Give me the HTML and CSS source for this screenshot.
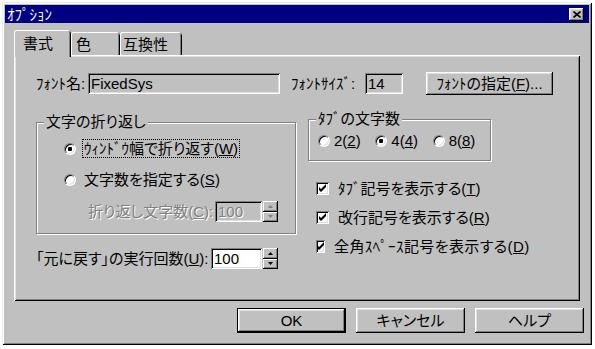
FILE: index.html
```html
<!DOCTYPE html>
<html lang="ja">
<head>
    <meta charset="UTF-8">
    <meta name="viewport" content="width=device-width, initial-scale=1.0">
    <title>オプション</title>
    <link rel="stylesheet" href="styles.css">
</head>
<body>
    <div class="window">
        <div class="titlebar">
            <span class="title">ｵﾌﾟｼｮﾝ</span>
            <span class="close-btn">
                <svg width="8" height="7" viewBox="0 0 8 7"><path d="M0.5 0.5l7 6M7.5 0.5l-7 6" stroke="#000" stroke-width="1.6"/></svg>
            </span>
        </div>

        <div class="tabs">
            <div class="tab active tab-format">書式</div>
            <div class="tab tab-color">色</div>
            <div class="tab tab-compat">互換性</div>
        </div>

        <div class="panel">
            <div class="font-row">
                <span class="lbl-name">ﾌｫﾝﾄ名:</span>
                <div class="textbox readonly tb-name">FixedSys</div>
                <span class="lbl-size">ﾌｫﾝﾄｻｲｽﾞ:</span>
                <div class="textbox readonly tb-size">14</div>
                <div class="button btn-font">ﾌｫﾝﾄの指定(<u>F</u>)...</div>
            </div>

            <div class="columns">
                <div class="col-left">
                    <div class="group group-wrap">
                        <span class="group-title">文字の折り返し</span>
                        <div class="option">
                            <span class="radio checked"></span>
                            <span class="opt-text focus">ｳｨﾝﾄﾞｳ幅で折り返す(<u>W</u>)</span>
                        </div>
                        <div class="option option-2">
                            <span class="radio"></span>
                            <span class="opt-text">文字数を指定する(<u>S</u>)</span>
                        </div>
                        <div class="field-row wrap-count">
                            <span class="disabled lbl-count">折り返し文字数(<u>C</u>):</span>
                            <div class="textbox readonly disabled tb-count">100</div>
                            <div class="spinner disabled">
                                <span class="spin-btn"><svg width="5" height="3" viewBox="0 0 5 3"><path d="M0 3h5L2.5 0z"/></svg></span>
                                <span class="spin-btn"><svg width="5" height="3" viewBox="0 0 5 3"><path d="M0 0h5L2.5 3z"/></svg></span>
                            </div>
                        </div>
                    </div>

                    <div class="field-row undo-row">
                        <span class="lbl-undo">「元に戻す」の実行回数(<u>U</u>):</span>
                        <div class="textbox tb-undo">100</div>
                        <div class="spinner">
                            <span class="spin-btn"><svg width="5" height="3" viewBox="0 0 5 3"><path d="M0 3h5L2.5 0z"/></svg></span>
                            <span class="spin-btn"><svg width="5" height="3" viewBox="0 0 5 3"><path d="M0 0h5L2.5 3z"/></svg></span>
                        </div>
                    </div>
                </div>

                <div class="col-right">
                    <div class="group group-tabs">
                        <span class="group-title">ﾀﾌﾞの文字数</span>
                        <div class="tab-sizes">
                            <div class="option tab-size"><span class="radio"></span><span class="opt-text">2(<u>2</u>)</span></div>
                            <div class="option tab-size"><span class="radio checked"></span><span class="opt-text">4(<u>4</u>)</span></div>
                            <div class="option tab-size"><span class="radio"></span><span class="opt-text">8(<u>8</u>)</span></div>
                        </div>
                    </div>

                    <div class="checks">
                        <div class="check-row">
                            <span class="checkbox"><svg width="9" height="9" viewBox="0 0 9 9"><path d="M1 3l2 2 5-5v3l-5 5-2-2z" fill="#000"/></svg></span>
                            <span>ﾀﾌﾞ記号を表示する(<u>T</u>)</span>
                        </div>
                        <div class="check-row">
                            <span class="checkbox"><svg width="9" height="9" viewBox="0 0 9 9"><path d="M1 3l2 2 5-5v3l-5 5-2-2z" fill="#000"/></svg></span>
                            <span>改行記号を表示する(<u>R</u>)</span>
                        </div>
                        <div class="check-row">
                            <span class="checkbox"><svg width="9" height="9" viewBox="0 0 9 9"><path d="M1 3l2 2 5-5v3l-5 5-2-2z" fill="#000"/></svg></span>
                            <span class="wide">全角ｽﾍﾟｰｽ記号を表示する(<u>D</u>)</span>
                        </div>
                    </div>
                </div>
            </div>
        </div>

        <div class="buttons">
            <div class="button default">OK</div>
            <div class="button">キャンセル</div>
            <div class="button">ヘルプ</div>
        </div>
    </div>
</body>
</html>
```

FILE: styles.css
```css
body {
    margin: 0;
    background: #fff;
    font-family: "Liberation Sans", "Noto Sans CJK JP", sans-serif;
    font-size: 15px;
    line-height: 17px;
    color: #000;
    font-feature-settings: "palt";
}
u {
    text-underline-offset: 1px;
}
.window {
    margin: 2px;
    width: 590px;
    height: 343px;
    box-sizing: border-box;
    padding: 3px;
    background: #c0c0c0;
    box-shadow: inset 1px 1px #e4f2e4, inset -1px -1px #000, inset 2px 2px #fff, inset -2px -2px #808080;
}
.titlebar {
    height: 18px;
    background: #000080;
    color: #fff;
    display: flex;
    align-items: center;
    justify-content: space-between;
    padding-left: 2px;
}
.close-btn {
    width: 15px;
    height: 13px;
    margin-right: 5px;
    background: #c0c0c0;
    display: flex;
    align-items: center;
    justify-content: center;
    box-shadow: inset -1px -1px #000, inset 1px 1px #fff, inset -2px -2px #808080, inset 2px 2px #dfdfdf;
}

/* tabs */
.tabs {
    display: flex;
    align-items: flex-end;
    height: 25px;
    margin: 7px 0 0 9px;
}
.tab {
    position: relative;
    box-sizing: border-box;
    height: 23px;
    padding-top: 4px;
    background: #c0c0c0;
    border-radius: 3px 3px 0 0;
    box-shadow: inset 1px 0 #fff, inset 0 1px #fff, inset -1px 0 #000, inset -2px 0 #808080;
}
.tab.active {
    height: 27px;
    margin-bottom: -2px;
    padding-top: 5px;
    z-index: 1;
}
.tab-format {
    width: 57px;
    padding-left: 9px;
}
.tab-color {
    width: 49px;
    padding-left: 5px;
}
.tab-compat {
    width: 62px;
    padding-left: 3px;
}

/* panel */
.panel {
    margin: 0 9px;
    height: 246px;
    box-sizing: border-box;
    padding: 17px 0 0 22px;
    box-shadow: inset 1px 1px #fff, inset -1px -1px #000, inset 2px 2px #dfdfdf, inset -2px -2px #808080;
}
.font-row {
    display: flex;
    align-items: center;
    height: 23px;
}
.lbl-name {
    width: 52px;
}
.lbl-size {
    width: 74px;
    margin-left: 11px;
}
.textbox {
    box-sizing: border-box;
    height: 21px;
    padding: 2px 3px;
    background: #fff;
    white-space: nowrap;
    box-shadow: inset 1px 1px #808080, inset -1px -1px #fff, inset 2px 2px #000, inset -2px -2px #dfdfdf;
}
.textbox.readonly {
    background: #c0c0c0;
}
.tb-name {
    width: 192px;
}
.tb-size {
    width: 38px;
}
.button {
    box-sizing: border-box;
    display: flex;
    align-items: center;
    justify-content: center;
    background: #c0c0c0;
    white-space: nowrap;
    box-shadow: inset -1px -1px #000, inset 1px 1px #fff, inset -2px -2px #808080, inset 2px 2px #dfdfdf;
}
.btn-font {
    width: 127px;
    height: 23px;
    margin-left: 23px;
}

.columns {
    display: grid;
    grid-template-columns: 260px 183px;
    column-gap: 12px;
    align-items: start;
    margin-top: 24px;
}
.group {
    position: relative;
    border: 1px solid #808080;
    box-shadow: inset 1px 1px #fff, 1px 1px #fff;
}
.group-title {
    position: absolute;
    top: -9px;
    left: 7px;
    padding: 0 2px;
    line-height: 16px;
    background: #c0c0c0;
    white-space: nowrap;
}
.group-wrap {
    margin-top: 3px;
    height: 112px;
    box-sizing: border-box;
    padding: 17px 0 0 27px;
}
.option {
    display: flex;
    align-items: center;
    height: 17px;
    white-space: nowrap;
}
.option-2 {
    margin-top: 14px;
}
.radio {
    box-sizing: border-box;
    width: 12px;
    height: 12px;
    margin-right: 6px;
    border-radius: 50%;
    background: #fff;
    border: 1px solid;
    border-color: #808080 #fff #fff #808080;
    box-shadow: inset 1px 1px #000, inset -1px -1px #dfdfdf;
}
.radio.checked {
    background: radial-gradient(circle, #000 2px, #fff 2.5px);
}
.opt-text {
    padding: 0 1px;
    border: 1px dotted transparent;
}
.opt-text.focus {
    border-color: #000;
}

.field-row {
    display: flex;
    align-items: center;
    height: 21px;
    white-space: nowrap;
}
.wrap-count {
    margin: 13px 0 0 24px;
}
.lbl-count {
    width: 127px;
}
.disabled {
    color: #808080;
    text-shadow: 1px 1px 0 #fff;
}
.tb-count {
    width: 47px;
}
.spinner {
    display: flex;
    flex-direction: column;
    width: 15px;
    height: 21px;
    margin-left: 1px;
}
.spin-btn {
    flex: 1;
    display: flex;
    align-items: center;
    justify-content: center;
    background: #c0c0c0;
    box-shadow: inset -1px -1px #000, inset 1px 1px #fff, inset -2px -2px #808080;
}
.spinner.disabled svg {
    fill: #808080;
}
.undo-row {
    margin-top: 14px;
}
.lbl-undo {
    width: 175px;
}
.tb-undo {
    width: 51px;
}

.group-tabs {
    height: 42px;
    box-sizing: border-box;
    padding: 12px 0 0 9px;
}
.tab-sizes {
    display: flex;
}
.tab-size {
    width: 60px;
}
.tab-size .radio {
    margin-right: 2px;
}
.checks {
    display: flex;
    flex-direction: column;
    gap: 12px;
    margin: 19px 0 0 8px;
}
.check-row {
    display: flex;
    align-items: center;
    height: 17px;
    white-space: nowrap;
}
.wide {
    letter-spacing: 0.4px;
}
.checkbox {
    box-sizing: border-box;
    width: 13px;
    height: 13px;
    margin-right: 9px;
    display: flex;
    align-items: center;
    justify-content: center;
    background: #fff;
    box-shadow: inset 1px 1px #808080, inset -1px -1px #fff, inset 2px 2px #000, inset -2px -2px #dfdfdf;
}

/* dialog buttons */
.buttons {
    display: flex;
    justify-content: flex-end;
    gap: 10px;
    margin-top: 7px;
    padding-right: 5px;
}
.buttons .button {
    width: 109px;
    height: 25px;
}
.button.default {
    box-shadow: inset 0 0 0 1px #000, inset -2px -2px #000, inset 2px 2px #fff, inset -3px -3px #808080, inset 3px 3px #dfdfdf;
}
```
